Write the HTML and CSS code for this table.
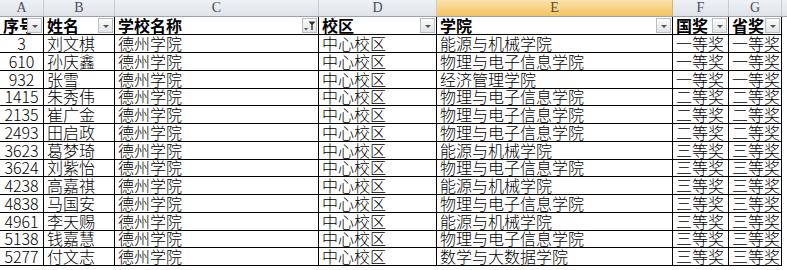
FILE: index.html
```html
<!DOCTYPE html>
<html lang="zh-CN">
<head>
<meta charset="utf-8">
<title>获奖名单</title>
<link rel="stylesheet" href="styles.css">
</head>
<body>
<div class="sheet">
  <div class="row letters">
    <div class="lc">A</div><div class="lc">B</div><div class="lc">C</div><div class="lc">D</div><div class="lc sel">E</div><div class="lc">F</div><div class="lc">G</div><div class="lc rest"></div>
  </div>
  <div class="row head">
    <div class="c clip"><span class="t">序号</span><span class="dd"></span></div>
    <div class="c"><span class="t">姓名</span><span class="dd"></span></div>
    <div class="c"><span class="t">学校名称</span><span class="dd flt"><svg width="15" height="15" viewBox="0 0 15 15"><path d="M2 10h4l-2 2.5z" fill="#555"/><path d="M6.5 3.5h7l-2.8 3.3v5.2h-1.4v-5.2z" fill="#333"/></svg></span></div>
    <div class="c"><span class="t">校区</span><span class="dd"></span></div>
    <div class="c"><span class="t">学院</span><span class="dd"></span></div>
    <div class="c"><span class="t">国奖</span><span class="dd"></span></div>
    <div class="c"><span class="t">省奖</span><span class="dd"></span></div>
    <div class="c rest"></div>
  </div>
  <div class="row"><div class="c num">3</div><div class="c">刘文棋</div><div class="c">德州学院</div><div class="c">中心校区</div><div class="c">能源与机械学院</div><div class="c">一等奖</div><div class="c">一等奖</div><div class="c rest"></div></div>
  <div class="row"><div class="c num">610</div><div class="c">孙庆鑫</div><div class="c">德州学院</div><div class="c">中心校区</div><div class="c">物理与电子信息学院</div><div class="c">一等奖</div><div class="c">一等奖</div><div class="c rest"></div></div>
  <div class="row"><div class="c num">932</div><div class="c">张雪</div><div class="c">德州学院</div><div class="c">中心校区</div><div class="c">经济管理学院</div><div class="c">一等奖</div><div class="c">一等奖</div><div class="c rest"></div></div>
  <div class="row"><div class="c num">1415</div><div class="c">朱秀伟</div><div class="c">德州学院</div><div class="c">中心校区</div><div class="c">物理与电子信息学院</div><div class="c">二等奖</div><div class="c">二等奖</div><div class="c rest"></div></div>
  <div class="row"><div class="c num">2135</div><div class="c">崔广金</div><div class="c">德州学院</div><div class="c">中心校区</div><div class="c">物理与电子信息学院</div><div class="c">二等奖</div><div class="c">二等奖</div><div class="c rest"></div></div>
  <div class="row"><div class="c num">2493</div><div class="c">田启政</div><div class="c">德州学院</div><div class="c">中心校区</div><div class="c">物理与电子信息学院</div><div class="c">二等奖</div><div class="c">二等奖</div><div class="c rest"></div></div>
  <div class="row"><div class="c num">3623</div><div class="c">葛梦琦</div><div class="c">德州学院</div><div class="c">中心校区</div><div class="c">能源与机械学院</div><div class="c">三等奖</div><div class="c">三等奖</div><div class="c rest"></div></div>
  <div class="row"><div class="c num">3624</div><div class="c">刘紫怡</div><div class="c">德州学院</div><div class="c">中心校区</div><div class="c">物理与电子信息学院</div><div class="c">三等奖</div><div class="c">三等奖</div><div class="c rest"></div></div>
  <div class="row"><div class="c num">4238</div><div class="c">高嘉祺</div><div class="c">德州学院</div><div class="c">中心校区</div><div class="c">能源与机械学院</div><div class="c">三等奖</div><div class="c">三等奖</div><div class="c rest"></div></div>
  <div class="row"><div class="c num">4838</div><div class="c">马国安</div><div class="c">德州学院</div><div class="c">中心校区</div><div class="c">物理与电子信息学院</div><div class="c">三等奖</div><div class="c">三等奖</div><div class="c rest"></div></div>
  <div class="row"><div class="c num">4961</div><div class="c">李天赐</div><div class="c">德州学院</div><div class="c">中心校区</div><div class="c">能源与机械学院</div><div class="c">三等奖</div><div class="c">三等奖</div><div class="c rest"></div></div>
  <div class="row"><div class="c num">5138</div><div class="c">钱嘉慧</div><div class="c">德州学院</div><div class="c">中心校区</div><div class="c">物理与电子信息学院</div><div class="c">三等奖</div><div class="c">三等奖</div><div class="c rest"></div></div>
  <div class="row"><div class="c num">5277</div><div class="c">付文志</div><div class="c">德州学院</div><div class="c">中心校区</div><div class="c">数学与大数据学院</div><div class="c">三等奖</div><div class="c">三等奖</div><div class="c rest"></div></div>
</div>
</body>
</html>
```

FILE: styles.css
```css
html, body {
  margin: 0;
  padding: 0;
  background: #ffffff;
}

.sheet {
  width: 787px;
  height: 270px;
  overflow: hidden;
  font-family: "Noto Sans CJK SC", "Noto Sans", sans-serif;
  font-size: 16px;
  font-weight: 300;
  color: #000;
}

.row {
  display: grid;
  grid-template-columns: 44px 71px 204px 118px 236px 56px 53px 5px;
  height: 17.75px;
}

.letters {
  height: 17px;
  background: linear-gradient(#eef1f5, #dfe3e9);
  border-bottom: 1px solid #9aa4b1;
  box-sizing: border-box;
}

.lc {
  font-family: "Liberation Serif", serif;
  font-size: 14px;
  font-weight: 400;
  line-height: 16px;
  color: #4a4f57;
  text-align: center;
  border-right: 1px solid #c6ccd4;
}

.lc.sel {
  background: linear-gradient(#fbe3ad, #f3c463);
  color: #5a4a30;
  border-right-color: #e2b25a;
}

.lc.rest {
  border-right: none;
}

.head {
  height: 18px;
  font-weight: 700;
}

.c {
  position: relative;
  border-right: 1px solid #000;
  border-bottom: 1px solid #000;
  display: flex;
  align-items: flex-end;
  padding-left: 3px;
  line-height: 17px;
  white-space: nowrap;
  box-sizing: border-box;
}

.c.clip {
  overflow: hidden;
}

.c.num {
  justify-content: center;
  padding-left: 0;
}

.c.rest {
  border: none;
}

.t {
  display: block;
}

.dd {
  position: absolute;
  right: 1px;
  bottom: 1px;
  width: 15px;
  height: 15px;
  box-sizing: border-box;
  border: 1px solid #b9bcc1;
  background: linear-gradient(#fbfbfb, #e3e4e6);
}

.dd::after {
  content: "";
  position: absolute;
  left: 4px;
  top: 6px;
  border-left: 3px solid transparent;
  border-right: 3px solid transparent;
  border-top: 3px solid #555;
}

.dd.flt::after {
  display: none;
}

.dd.flt svg {
  position: absolute;
  left: -1px;
  top: -1px;
}
```
